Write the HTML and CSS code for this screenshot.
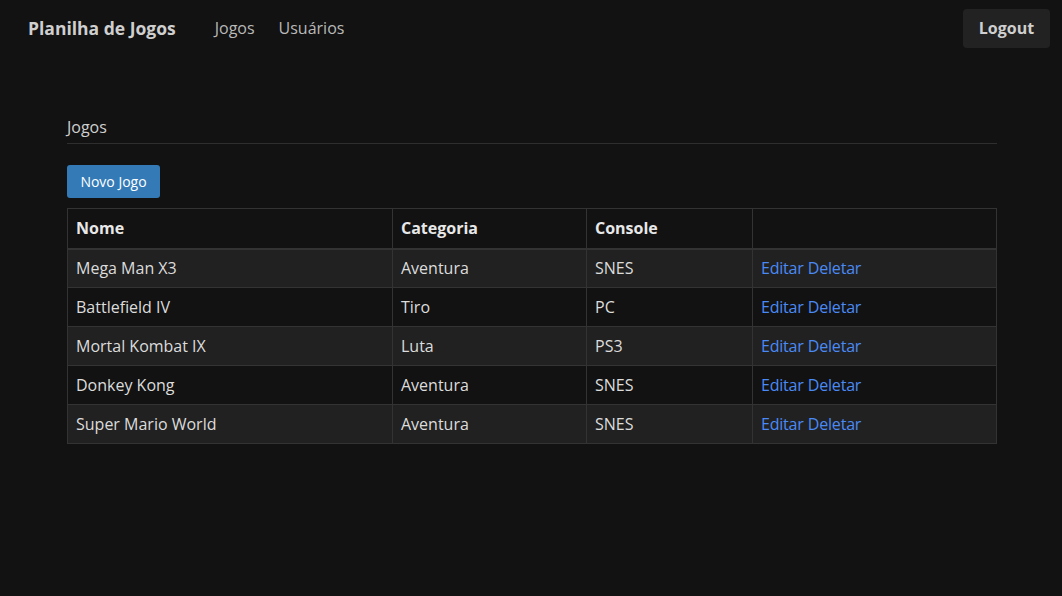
FILE: index.html
```html
<!DOCTYPE html>
<html lang="pt">
<head>
<meta charset="utf-8">
<title>Planilha de Jogos</title>
<link rel="stylesheet" href="styles.css">
</head>
<body>
<nav class="navbar">
  <a class="brand" href="#">Planilha de Jogos</a>
  <ul class="nav-links">
    <li><a href="#">Jogos</a></li>
    <li><a href="#">Usuários</a></li>
  </ul>
  <button class="logout">Logout</button>
</nav>
<main class="container">
  <h2 class="page-title">Jogos</h2>
  <button class="btn-primary">Novo Jogo</button>
  <table class="games">
    <colgroup>
      <col class="c-nome"><col class="c-cat"><col class="c-console"><col class="c-act">
    </colgroup>
    <thead>
      <tr><th>Nome</th><th>Categoria</th><th>Console</th><th></th></tr>
    </thead>
    <tbody>
      <tr><td>Mega Man X3</td><td>Aventura</td><td>SNES</td><td><a href="#">Editar</a> <a href="#">Deletar</a></td></tr>
      <tr><td>Battlefield IV</td><td>Tiro</td><td>PC</td><td><a href="#">Editar</a> <a href="#">Deletar</a></td></tr>
      <tr><td>Mortal Kombat IX</td><td>Luta</td><td>PS3</td><td><a href="#">Editar</a> <a href="#">Deletar</a></td></tr>
      <tr><td>Donkey Kong</td><td>Aventura</td><td>SNES</td><td><a href="#">Editar</a> <a href="#">Deletar</a></td></tr>
      <tr><td>Super Mario World</td><td>Aventura</td><td>SNES</td><td><a href="#">Editar</a> <a href="#">Deletar</a></td></tr>
    </tbody>
  </table>
</main>
</body>
</html>
```
FILE: styles.css
```css
* { box-sizing: border-box; }
html, body { margin: 0; padding: 0; }
body {
  background: #121212;
  color: #dcdcdc;
  font-family: "Segoe UI", "Open Sans", "Noto Sans", sans-serif;
  font-size: 16px;
  line-height: 1.5;
  min-height: 596px;
}
a { text-decoration: none; }

.navbar {
  display: flex;
  align-items: center;
  height: 56px;
  padding: 0 12px 0 28px;
}
.brand {
  color: #cfcfcf;
  font-weight: 700;
  font-size: 17.5px;
  margin-right: 39px;
}
.nav-links {
  display: flex;
  gap: 24px;
  list-style: none;
  margin: 0;
  padding: 0;
  flex: 1;
}
.nav-links a { color: #b9b9b9; font-size: 16px; }
.logout {
  background: #222222;
  color: #cfcfcf;
  border: none;
  border-radius: 4px;
  font-family: inherit;
  font-weight: 700;
  font-size: 16px;
  height: 39px;
  width: 87px;
  padding: 0;
}

.container {
  margin: 0 65px 0 67px;
  padding-top: 59px;
}
.page-title {
  font-size: 16px;
  font-weight: 400;
  color: #cfcfcf;
  margin: 0;
  padding-bottom: 4px;
  border-bottom: 1px solid #2e2e2e;
}
.btn-primary {
  margin-top: 21px;
  background: #337ab7;
  color: #fff;
  border: none;
  border-radius: 3px;
  font-family: inherit;
  font-size: 14px;
  height: 33px;
  width: 93px;
  padding: 0;
}
.games {
  margin-top: 10px;
  width: 100%;
  border-collapse: collapse;
  border: 1px solid #333;
}
.c-nome { width: 325px; }
.c-cat { width: 194px; }
.c-console { width: 166px; }
.games th, .games td {
  border: 1px solid #333;
  text-align: left;
  padding: 0 8px;
  height: 39px;
}
.games th { height: 40px; font-weight: 700; color: #e8e8e8; border-bottom-width: 2px; }
.games tbody tr:nth-child(odd) { background: #212121; }
.games tbody tr:nth-child(even) { background: #121212; }
.games td a { color: #4a8af4; letter-spacing: -0.2px; }
```
